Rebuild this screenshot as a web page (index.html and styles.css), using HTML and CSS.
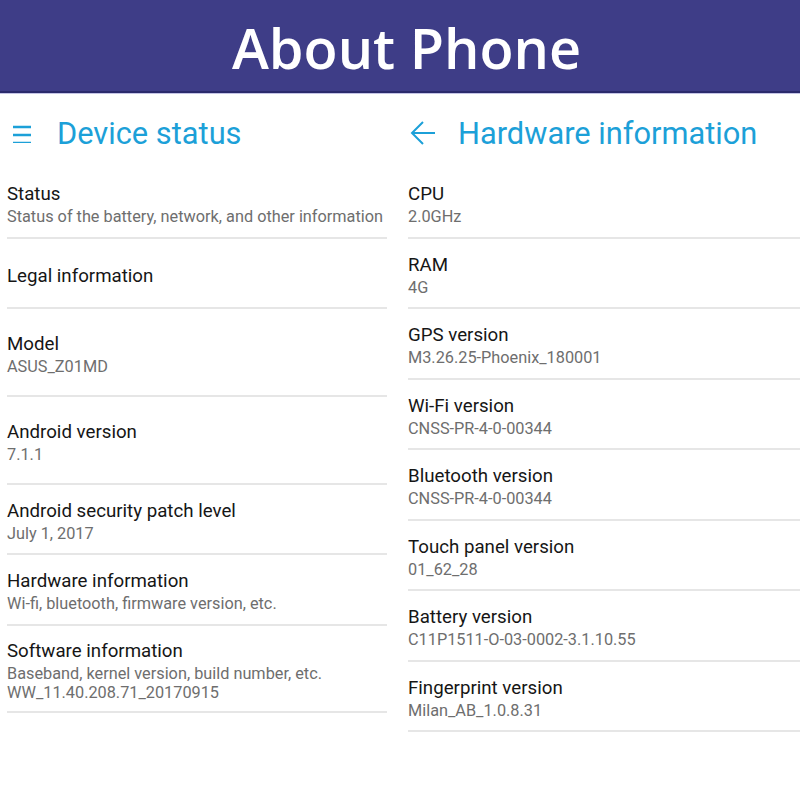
FILE: index.html
```html
<!DOCTYPE html>
<html>
<head>
<meta charset="utf-8">
<link rel="stylesheet" href="styles.css">
</head>
<body>
<header class="banner">
  <h1 class="banner-title">About Phone</h1>
</header>
<main class="panes">
  <section class="pane pane-left">
    <div class="toolbar">
      <svg class="icon icon-menu" width="18" height="18" viewBox="0 0 18 18">
        <path d="M0 2H18M0 10H18M0 18H18" stroke="#1ca0d8" stroke-width="2.4" fill="none"/>
      </svg>
      <h2 class="toolbar-title">Device status</h2>
    </div>
    <div class="row row-first">
      <div class="row-title">Status</div>
      <div class="row-sub">Status of the battery, network, and other information</div>
    </div>
    <div class="row row-single">
      <div class="row-title">Legal information</div>
    </div>
    <div class="row row-tall">
      <div class="row-title">Model</div>
      <div class="row-sub">ASUS_Z01MD</div>
    </div>
    <div class="row row-tall">
      <div class="row-title">Android version</div>
      <div class="row-sub">7.1.1</div>
    </div>
    <div class="row">
      <div class="row-title">Android security patch level</div>
      <div class="row-sub">July 1, 2017</div>
    </div>
    <div class="row">
      <div class="row-title">Hardware information</div>
      <div class="row-sub">Wi-fi, bluetooth, firmware version, etc.</div>
    </div>
    <div class="row row-multi">
      <div class="row-title">Software information</div>
      <div class="row-sub">Baseband, kernel version, build number, etc.</div>
      <div class="row-sub row-sub2">WW_11.40.208.71_20170915</div>
    </div>
  </section>
  <section class="pane pane-right">
    <div class="toolbar">
      <svg class="icon icon-back" width="26" height="26" viewBox="0 0 26 26">
        <path d="M25 13H2M13 2L2 13L13 24" stroke="#1ca0d8" stroke-width="2" fill="none"/>
      </svg>
      <h2 class="toolbar-title">Hardware information</h2>
    </div>
    <div class="row row-first">
      <div class="row-title">CPU</div>
      <div class="row-sub">2.0GHz</div>
    </div>
    <div class="row">
      <div class="row-title">RAM</div>
      <div class="row-sub">4G</div>
    </div>
    <div class="row">
      <div class="row-title">GPS version</div>
      <div class="row-sub">M3.26.25-Phoenix_180001</div>
    </div>
    <div class="row">
      <div class="row-title">Wi-Fi version</div>
      <div class="row-sub">CNSS-PR-4-0-00344</div>
    </div>
    <div class="row">
      <div class="row-title">Bluetooth version</div>
      <div class="row-sub">CNSS-PR-4-0-00344</div>
    </div>
    <div class="row">
      <div class="row-title">Touch panel version</div>
      <div class="row-sub">01_62_28</div>
    </div>
    <div class="row">
      <div class="row-title">Battery version</div>
      <div class="row-sub">C11P1511-O-03-0002-3.1.10.55</div>
    </div>
    <div class="row">
      <div class="row-title">Fingerprint version</div>
      <div class="row-sub">Milan_AB_1.0.8.31</div>
    </div>
  </section>
</main>
</body>
</html>
```

FILE: styles.css
```css
html, body {
  margin: 0;
  padding: 0;
  background: #ffffff;
}
body {
  width: 800px;
  height: 800px;
  overflow: hidden;
  font-family: Roboto, "Liberation Sans", sans-serif;
}
.banner {
  height: 91px;
  background: #3e3d87;
  border-bottom: 2px solid #2b2a6c;
  box-shadow: 0 1px 0 #c4c4e6;
  display: flex;
  align-items: center;
  justify-content: center;
}
.banner-title {
  margin: 0 0 0 13px;
  color: #ffffff;
  font-family: "Open Sans", sans-serif;
  font-weight: 600;
  font-size: 55.8px;
  line-height: 1;
  padding-top: 4px;
}
.panes {
  display: grid;
  grid-template-columns: 380px 1fr;
  column-gap: 21px;
  padding-left: 7px;
}
.pane {
  display: flex;
  flex-direction: column;
}
.toolbar {
  height: 69px;
  padding-top: 6px;
  display: flex;
  align-items: center;
}
.icon {
  flex: none;
}
.icon-menu {
  margin-left: 6px;
  margin-right: 26px;
}
.icon-back {
  margin-left: 2px;
  margin-right: 22px;
  margin-top: -2px;
}
.toolbar-title {
  margin: 0;
  padding-top: 1px;
  color: #1ca0d8;
  font-weight: 400;
  font-size: 30.8px;
  line-height: 36px;
}
.row {
  box-sizing: border-box;
  height: 70.43px;
  padding-top: 14px;
  border-bottom: 2px solid #e6e6e6;
}
.row-title {
  color: #161616;
  font-size: 18.7px;
  line-height: 24px;
}
.row-sub {
  color: #6e6e6e;
  font-size: 16.3px;
  line-height: 22px;
}
.row-sub2 {
  line-height: 20px;
  margin-top: -2px;
}
.row-first {
  height: 71px;
}
.row-single {
  height: 70px;
  padding-top: 25px;
}
.row-tall {
  height: 88px;
  padding-top: 23px;
}
.row-multi {
  height: 87px;
  padding-top: 13px;
}
```
